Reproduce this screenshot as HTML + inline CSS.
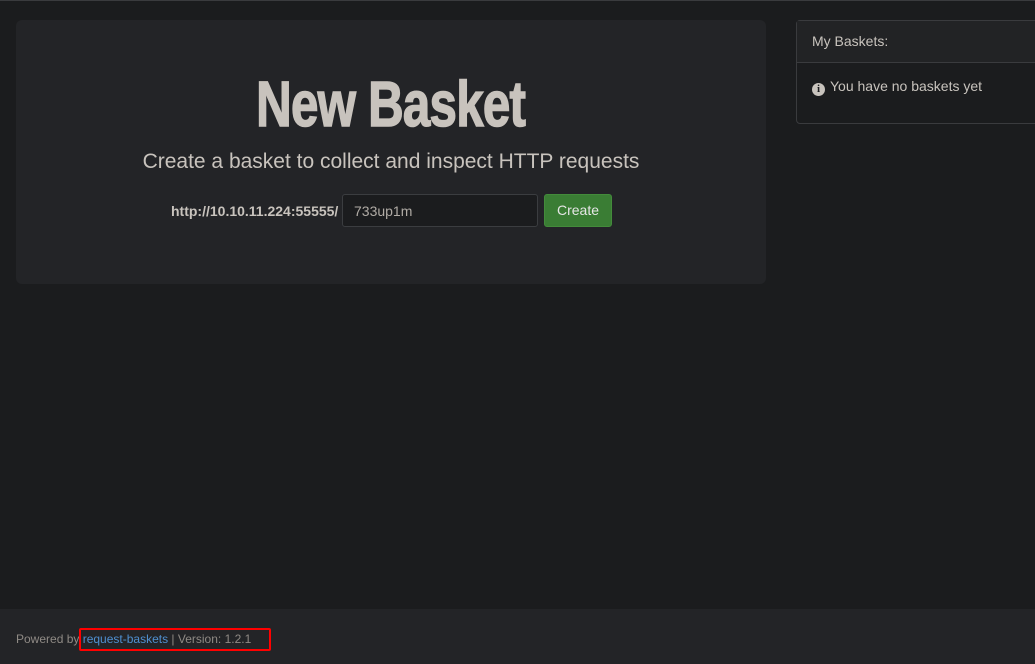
<!DOCTYPE html>
<html><head><style>
html,body{margin:0;padding:0;}
body{width:1035px;height:663px;background:#1b1c1e;font-family:"Liberation Sans",sans-serif;position:relative;overflow:hidden;border-top:1px solid #3a3b3e;box-sizing:border-box;}
.jumbo{position:absolute;left:16px;top:19px;width:750px;height:264px;background:#232427;border-radius:6px;}
.title{position:absolute;left:0;width:750px;top:49px;text-align:center;}
.title span{display:inline-block;font-family:"Liberation Sans Narrow","Liberation Sans",sans-serif;font-weight:bold;font-size:64px;color:#c8c3bd;transform:scaleX(0.77);letter-spacing:-1px;line-height:70px;-webkit-text-stroke:1.5px #c8c3bd;}
.sub{position:absolute;left:0;width:750px;top:130px;text-align:center;font-size:21px;color:#c8c3bd;}
.url{position:absolute;left:155px;top:183px;font-size:14px;font-weight:bold;color:#c8c3bd;}
.inp{position:absolute;left:326px;top:174px;width:196px;height:33px;background:#1b1c1e;border:1px solid #3b3d40;border-radius:3px;box-sizing:border-box;font-size:14px;color:#b0aba5;padding:8px 11px;}
.btn{position:absolute;left:528px;top:174px;width:68px;height:33px;background:#3a7d34;border:1px solid #438b3b;border-radius:3px;box-sizing:border-box;color:#e6e6e6;font-size:14px;text-align:center;line-height:31px;}
.panel{position:absolute;left:796px;top:19px;width:250px;height:104px;border:1px solid #3a3b3e;border-radius:4px;box-sizing:border-box;}
.ph{height:42px;background:#222325;border-bottom:1px solid #3a3b3e;box-sizing:border-box;color:#c8c3bd;font-size:14px;padding:12px 15px;}
.pb{padding:15px 15px;color:#c8c3bd;font-size:14px;}
.ic{display:inline-block;width:13px;height:13px;border-radius:50%;background:#c8c3bd;color:#1b1c1e;font-size:11px;font-weight:bold;text-align:center;line-height:13px;font-family:"Liberation Serif",serif;vertical-align:-1px;margin-right:5px;}
.foot{position:absolute;left:0;top:608px;width:1035px;height:55px;background:#232427;}
.ft{position:absolute;left:16px;top:23px;font-size:12px;color:#8f8a85;}
.ft a{color:#4f8fd0;text-decoration:none;}
.red{position:absolute;left:79px;top:19px;width:192px;height:23px;border:2px solid #ff0000;box-sizing:border-box;border-radius:2px;}
</style></head><body>
<div class="jumbo">
<div class="title"><span>New Basket</span></div>
<div class="sub">Create a basket to collect and inspect HTTP requests</div>
<div class="url">http://10.10.11.224:55555/</div>
<div class="inp">733up1m</div>
<div class="btn">Create</div>
</div>
<div class="panel"><div class="ph">My Baskets:</div><div class="pb"><span class="ic">i</span>You have no baskets yet</div></div>
<div class="foot"><div class="ft">Powered by <a>request-baskets</a> | Version: 1.2.1</div><div class="red"></div></div>
</body></html>
